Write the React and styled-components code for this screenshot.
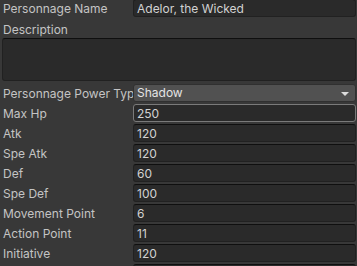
import React from 'react'
import styled, { createGlobalStyle } from 'styled-components'

const Global = createGlobalStyle`
  html, body {
    margin: 0;
    padding: 0;
    background: #383838;
    overflow: hidden;
  }
  body {
    font-family: Inter, "Noto Sans", sans-serif;
    font-size: 12px;
  }
`

const Page = styled.div`
  width: 357px;
  height: 266px;
  overflow: hidden;
`

const Inspector = styled.div`
  margin-top: -2px;
  padding: 0 1px 0 2px;
  display: flex;
  flex-direction: column;
`

const Row = styled.div`
  display: flex;
  align-items: flex-start;
  height: 20px;
  flex-shrink: 0;
`

const Label = styled.div`
  width: 130px;
  padding: ${p => p.drop || 1}px 0 0 1px;
  flex-shrink: 0;
  color: #c4c4c4;
  white-space: nowrap;
  overflow: hidden;
  line-height: 20px;
`

const Field = styled.div`
  flex: 1;
  height: 18px;
  margin-top: 1px;
  box-sizing: border-box;
  background: #2a2a2a;
  border: 1px solid ${p => (p.focused ? '#7a7a7a' : '#212121')};
  border-top-color: ${p => (p.focused ? '#7a7a7a' : '#0f0f0f')};
  border-radius: 3px;
  color: #d2d2d2;
  padding-left: 3px;
  line-height: 17px;
  white-space: nowrap;
  overflow: hidden;
`

const TextArea = styled.div`
  height: 43px;
  margin-bottom: 2px;
  box-sizing: border-box;
  background: #2a2a2a;
  border: 1px solid #212121;
  border-top-color: #0f0f0f;
  border-radius: 3px;
  flex-shrink: 0;
`

const Dropdown = styled.div`
  flex: 1;
  height: 18px;
  margin-top: 1px;
  box-sizing: border-box;
  background: #515151;
  border: 1px solid #303030;
  border-radius: 3px;
  color: #e4e4e4;
  padding: 0 6px 0 3px;
  line-height: 16px;
  display: flex;
  align-items: center;
  justify-content: space-between;
`

const Arrow = styled.div`
  width: 0;
  height: 0;
  margin-top: 1px;
  border-left: 4px solid transparent;
  border-right: 4px solid transparent;
  border-top: 4px solid #dcdcdc;
`

const stats = [
  ['Max Hp', '250', true],
  ['Atk', '120'],
  ['Spe Atk', '120'],
  ['Def', '60'],
  ['Spe Def', '100'],
  ['Movement Point', '6'],
  ['Action Point', '11'],
  ['Initiative', '120'],
]

const App = () => {
  return (
    <>
      <Global />
      <Page>
        <Inspector>
          <Row>
            <Label>Personnage Name</Label>
            <Field>Adelor, the Wicked</Field>
          </Row>
          <Row>
            <Label drop={2}>Description</Label>
          </Row>
          <TextArea />
          <Row>
            <Label>Personnage Power Type</Label>
            <Dropdown>
              <span>Shadow</span>
              <Arrow />
            </Dropdown>
          </Row>
          {stats.map(([name, value, focused]) => (
            <Row key={name}>
              <Label>{name}</Label>
              <Field focused={focused}>{value}</Field>
            </Row>
          ))}
          <Row>
            <Label />
            <Field />
          </Row>
        </Inspector>
      </Page>
    </>
  )
}

export default App
